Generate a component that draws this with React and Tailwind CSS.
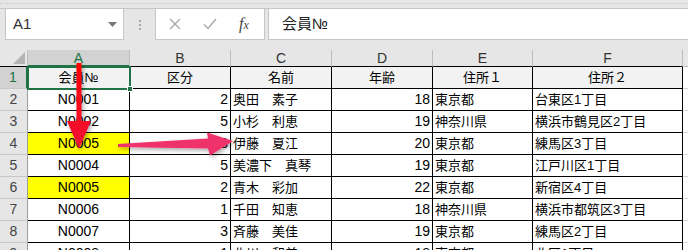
import React from 'react';

const cols = [
  { key: 'a', w: 'w-[102px]', align: 'justify-center', size: 'text-[14px]' },
  { key: 'b', w: 'w-[101px]', align: 'justify-end', size: 'text-[14px]' },
  { key: 'c', w: 'w-[101px]', align: 'justify-start', size: 'text-[13px]' },
  { key: 'd', w: 'w-[101px]', align: 'justify-end', size: 'text-[14px]' },
  { key: 'e', w: 'w-[100px]', align: 'justify-start', size: 'text-[13px]' },
  { key: 'f', w: 'w-[150px]', align: 'justify-start', size: 'text-[13px]' },
];

const letters = ['A', 'B', 'C', 'D', 'E', 'F'];

const rows = [
  { n: '1', a: '会員№', b: '区分', c: '名前', d: '年齢', e: '住所１', f: '住所２', head: true },
  { n: '2', a: 'N0001', b: '2', c: '奥田　素子', d: '18', e: '東京都', f: '台東区1丁目' },
  { n: '3', a: 'N0002', b: '5', c: '小杉　利恵', d: '19', e: '神奈川県', f: '横浜市鶴見区2丁目' },
  { n: '4', a: 'N0005', b: '3', c: '伊藤　夏江', d: '20', e: '東京都', f: '練馬区3丁目', mark: true },
  { n: '5', a: 'N0004', b: '5', c: '美濃下　真琴', d: '19', e: '東京都', f: '江戸川区1丁目' },
  { n: '6', a: 'N0005', b: '2', c: '青木　彩加', d: '22', e: '東京都', f: '新宿区4丁目', mark: true },
  { n: '7', a: 'N0006', b: '1', c: '千田　知恵', d: '18', e: '神奈川県', f: '横浜市都筑区3丁目' },
  { n: '8', a: 'N0007', b: '3', c: '斉藤　美佳', d: '19', e: '東京都', f: '練馬区2丁目' },
  { n: '9', a: 'N0008', b: '1', c: '北川　和美', d: '18', e: '東京都', f: '北区1丁目' },
];

const font = "font-['Liberation_Sans','Noto_Sans_CJK_JP',sans-serif]";

function Row({ r }) {
  return (
    <div className="flex h-[22px] shrink-0">
      <div
        className={`w-[28px] shrink-0 flex items-center justify-center border-b border-[#c8c8c8] text-[14px] ${
          r.head
            ? 'bg-[#d2d2d2] text-[#217346] border-r-2 border-r-[#217346]'
            : 'bg-[#e6e6e6] text-[#444] border-r border-r-[#9e9e9e]'
        }`}
      >
        {r.n}
      </div>
      {cols.map((c, i) => (
        <div
          key={c.key}
          className={`${c.w} shrink-0 flex items-center ${r.head ? 'justify-center' : c.align} px-[2px] ${
            r.head ? 'text-[13px]' : c.size
          } border-b border-r border-black ${
            r.head ? 'bg-[#f2f2f2]' : r.mark && i === 0 ? 'bg-[#ffff00]' : 'bg-white'
          } text-black whitespace-nowrap overflow-hidden`}
        >
          {r[c.key]}
        </div>
      ))}
      <div className="flex-1 border-b border-[#d4d4d4] bg-white" />
    </div>
  );
}

export default function App() {
  return (
    <div className={`relative w-[688px] h-[250px] overflow-hidden bg-[#e6e6e6] ${font}`}>
      {/* ribbon edge */}
      <div className="h-[9px] border-b border-[#c6c6c6] flex items-start pt-[3px]">
        <div className="w-full border-t border-dotted border-[#c8c8c8]" />
      </div>

      {/* formula bar */}
      <div className="flex h-[31px] items-stretch">
        <div className="ml-[5px] w-[119px] -mt-px bg-white border border-[#c6c6c6] flex items-center justify-between pl-[7px] pr-[6px] text-[15px] text-[#333]">
          <span>A1</span>
          <svg width="9" height="5" viewBox="0 0 9 5">
            <path d="M0 0 H9 L4.5 5 Z" fill="#777" />
          </svg>
        </div>
        <div className="w-[31px] flex flex-col items-center justify-center gap-[2px]">
          <span className="w-[2px] h-[2px] bg-[#aaa]" />
          <span className="w-[2px] h-[2px] bg-[#aaa]" />
          <span className="w-[2px] h-[2px] bg-[#aaa]" />
        </div>
        <div className="w-[110px] -mt-px bg-white border border-[#c6c6c6] flex items-center pl-[13px]">
          <svg width="12" height="12" viewBox="0 0 12 12" className="mr-[22px]">
            <path d="M1 1 L11 11 M11 1 L1 11" stroke="#a8a8a8" strokeWidth="1.4" />
          </svg>
          <svg width="14" height="12" viewBox="0 0 14 12" className="mr-[22px]">
            <path d="M1 6.5 L5 10.5 L13 1" stroke="#a8a8a8" strokeWidth="1.4" fill="none" />
          </svg>
          <span className="font-['Liberation_Serif',serif] italic text-[16px] text-[#444] leading-none">
            f<span className="text-[12px]">x</span>
          </span>
        </div>
        <div className="ml-[3px] flex-1 -mt-px bg-white border-y border-l border-[#c6c6c6] flex items-center pl-[13px] text-[15px] text-[#222]">
          会員№
        </div>
      </div>

      <div className="h-[10px]" />

      {/* column headers */}
      <div className="flex h-[17px]">
        <div className="w-[28px] shrink-0 relative border-r border-[#bdbdbd] border-b border-b-black">
          <svg className="absolute right-[2px] bottom-[2px]" width="12" height="12" viewBox="0 0 12 12">
            <path d="M12 0 V12 H0 Z" fill="#b4b4b4" />
          </svg>
        </div>
        {cols.map((c, i) => (
          <div
            key={c.key}
            className={`${c.w} shrink-0 flex items-center justify-center text-[14px] leading-none border-r border-[#bdbdbd] ${
              i === 0
                ? 'bg-[#d2d2d2] text-[#217346] border-b-2 border-b-[#217346]'
                : 'text-[#333] border-b border-b-black'
            }`}
          >
            {letters[i]}
          </div>
        ))}
        <div className="flex-1 border-b border-[#bdbdbd]" />
      </div>

      {rows.map((r) => (
        <Row key={r.n} r={r} />
      ))}

      {/* selection on A1 */}
      <div className="absolute left-[27px] top-[66px] w-[104px] h-[24px] border-2 border-[#217346] pointer-events-none">
        <div className="absolute -right-[4px] -bottom-[4px] w-[6px] h-[6px] bg-[#217346] border border-white" />
      </div>

      {/* arrows */}
      <svg className="absolute left-0 top-0 pointer-events-none" width="688" height="250" viewBox="0 0 688 250">
        <defs>
          <filter id="sh" x="-50%" y="-50%" width="200%" height="200%">
            <feDropShadow dx="1.5" dy="2" stdDeviation="2" floodColor="#000" floodOpacity="0.35" />
          </filter>
          <linearGradient id="vg" x1="0" y1="0" x2="0" y2="1">
            <stop offset="0" stopColor="#ff0000" />
            <stop offset="1" stopColor="#ee1439" />
          </linearGradient>
        </defs>
        <g filter="url(#sh)">
          <path d="M76.5 63 H81.5 V121 H91 L79 149 L67 121 H76.5 Z" fill="url(#vg)" />
        </g>
        <g filter="url(#sh)">
          <path d="M118 144 L208 138.5 L207 132.5 L233 141 L210 155.5 L208 148.5 L118 147 Z" fill="#f0306a" />
        </g>
      </svg>
    </div>
  );
}
